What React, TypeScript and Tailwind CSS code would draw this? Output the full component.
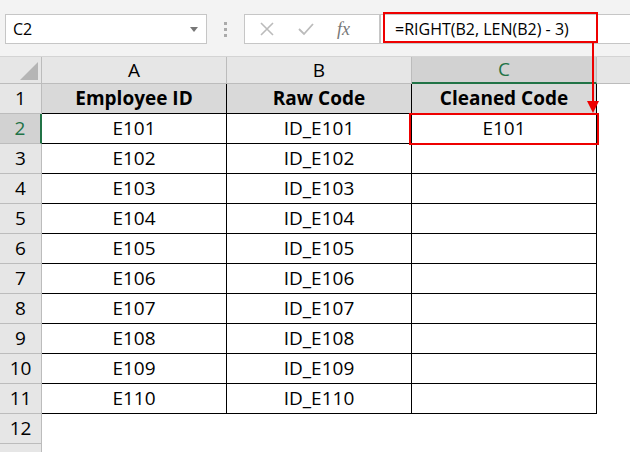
const rows = [
  ["E101", "ID_E101"],
  ["E102", "ID_E102"],
  ["E103", "ID_E103"],
  ["E104", "ID_E104"],
  ["E105", "ID_E105"],
  ["E106", "ID_E106"],
  ["E107", "ID_E107"],
  ["E108", "ID_E108"],
  ["E109", "ID_E109"],
  ["E110", "ID_E110"],
];

const font = { fontFamily: "'Open Sans', 'Liberation Sans', sans-serif" };

export default function App() {
  return (
    <div className="relative h-[452px] w-[630px] overflow-hidden bg-white text-black" style={font}>
      {/* formula bar */}
      <div className="flex h-[57px] items-start border-b border-[#d4d4d4] bg-[#f3f3f3] pt-[14px]">
        <div className="ml-[5px] flex h-[30px] w-[202px] items-center justify-between border border-[#c6c6c6] bg-white pl-[7px] pr-[8px] text-[16px]">
          <span>C2</span>
          <span className="h-0 w-0 border-x-[4px] border-t-[5px] border-x-transparent border-t-[#777]" />
        </div>
        <div className="mx-[17px] mt-[8px] flex flex-col gap-[3px]">
          <span className="h-[3px] w-[3px] bg-[#aaa]" />
          <span className="h-[3px] w-[3px] bg-[#aaa]" />
          <span className="h-[3px] w-[3px] bg-[#aaa]" />
        </div>
        <div className="flex h-[30px] w-[136px] items-center gap-[22px] border border-[#c6c6c6] bg-white pl-[14px]">
          <svg width="16" height="16" viewBox="0 0 16 16"><path d="M2 2l12 12M14 2L2 14" stroke="#bbb" strokeWidth="1.6" /></svg>
          <svg width="18" height="16" viewBox="0 0 18 16"><path d="M2 8l5 5L16 3" stroke="#bbb" strokeWidth="1.8" fill="none" /></svg>
          <span className="text-[18px] italic text-[#777]" style={{ fontFamily: "'Liberation Serif', serif" }}>fx</span>
        </div>
        <div className="flex h-[30px] flex-1 items-center border-y border-l border-[#c6c6c6] bg-white pl-[14px] text-[16px]">
          =RIGHT(B2, LEN(B2) - 3)
        </div>
      </div>

      {/* grid */}
      <div className="grid grid-cols-[42px_185px_185px_185px_1fr]">
        <div className="relative h-[27px] border-b border-r border-[#bcbcbc] bg-[#e6e6e6]">
          <span className="absolute bottom-[3px] right-[3px] h-0 w-0 border-b-[18px] border-l-[18px] border-b-[#b5b5b5] border-l-transparent" />
        </div>
        {["A", "B", "C"].map((c) => (
          <div
            key={c}
            className={
              c === "C"
                ? "flex h-[27px] items-center justify-center border-b-2 border-r border-b-[#217346] border-r-[#bcbcbc] bg-[#d2d2d2] text-[19px] text-[#217346]"
                : "flex h-[27px] items-center justify-center border-b border-r border-[#bcbcbc] bg-[#e6e6e6] text-[19px]"
            }
          >
            {c}
          </div>
        ))}
        <div className="h-[27px] border-b border-[#bcbcbc] bg-[#e6e6e6]" />

        <div className="flex h-[30px] items-center justify-center border-b border-r border-[#bcbcbc] bg-[#e6e6e6] text-[19px]">1</div>
        {["Employee ID", "Raw Code", "Cleaned Code"].map((h) => (
          <div key={h} className="flex h-[30px] items-center justify-center border-b border-r border-black bg-[#d9d9d9] text-[19px] font-bold">
            {h}
          </div>
        ))}
        <div />

        {rows.map(([a, b], i) => (
          <div key={a} className="contents">
            <div
              className={
                i === 0
                  ? "flex h-[30px] items-center justify-center border-b border-r-2 border-b-[#bcbcbc] border-r-[#217346] bg-[#d2d2d2] text-[19px] text-[#217346]"
                  : "flex h-[30px] items-center justify-center border-b border-r border-[#bcbcbc] bg-[#e6e6e6] text-[19px]"
              }
            >
              {i + 2}
            </div>
            <div className="flex h-[30px] items-center justify-center border-b border-r border-black text-[19px]">{a}</div>
            <div className="flex h-[30px] items-center justify-center border-b border-r border-black text-[19px]">{b}</div>
            <div className="flex h-[30px] items-center justify-center border-b border-r border-black text-[19px]">{i === 0 ? "E101" : ""}</div>
            <div />
          </div>
        ))}
        <div className="flex h-[30px] items-center justify-center border-b border-r border-[#bcbcbc] bg-[#e6e6e6] text-[19px]">12</div>
        <div className="col-span-4" />
        <div className="h-[30px] border-r border-[#bcbcbc] bg-[#e6e6e6]" />
      </div>

      {/* callouts */}
      <div className="absolute left-[383px] top-[12px] h-[31px] w-[215px] border-2 border-[#e00]" />
      <div className="absolute left-[592px] top-[42px] h-[60px] w-[2px] bg-[#e00]" />
      <span className="absolute left-[587px] top-[101px] h-0 w-0 border-x-[6px] border-t-[12px] border-x-transparent border-t-[#e00]" />
      <div className="absolute left-[409px] top-[113px] h-[32px] w-[190px] border-2 border-[#e00]" />
    </div>
  );
}
